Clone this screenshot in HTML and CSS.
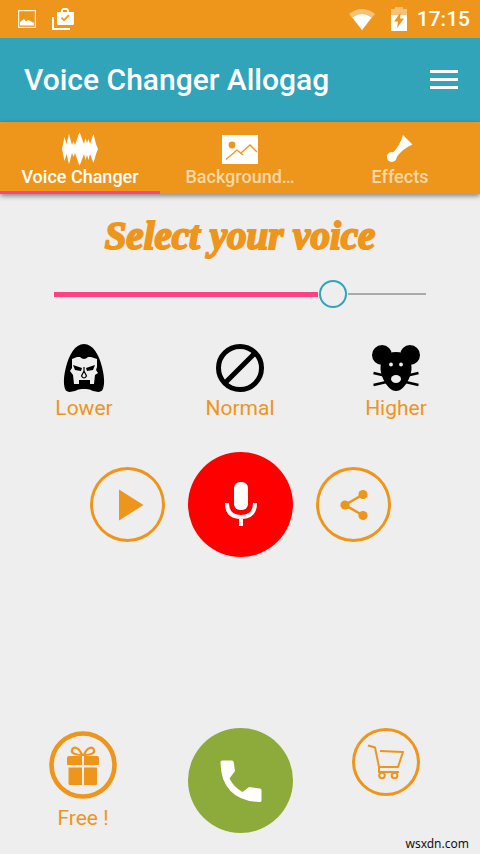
FILE: index.html
```html
<!DOCTYPE html>
<html lang="en">
<head>
<meta charset="utf-8">
<meta name="viewport" content="width=device-width, initial-scale=1">
<title>Voice Changer Allogag</title>
<link rel="stylesheet" href="styles.css">
</head>
<body>
<div class="app">
  <div class="status">
    <div class="status-group">
      <svg class="pic" viewBox="0 0 18 18" aria-hidden="true"><path d="M.6.6h16.8v16.8H.6z" fill="none" stroke="#fff3dc" stroke-width="1.2"/><path d="M2 15.500v-3.500l4-3 2 2.500 2-1.500 2.500 1 3.500 2v2.500z" fill="#fff"/></svg>
      <svg class="bag" viewBox="0 0 22 22" aria-hidden="true"><path d="M1 9v12h17" fill="none" stroke="#fff" stroke-width="2"/><path fill="#fff" fill-rule="evenodd" d="M5 4h4V2l2-2h4l2 2v2h5v11.500a1.500 1.500 0 0 1-1.500 1.500h-14A1.500 1.500 0 0 1 5 15.500zM11 4h4V2h-4z"/><path d="M9.500 9.700l2.500 2.500 5-5" fill="none" stroke="#ee951c" stroke-width="1.700"/></svg>
    </div>
    <div class="status-group status-right">
      <svg class="wifi" viewBox="0 0 26 21" aria-hidden="true"><path d="M0 5Q13-5 26 5L13 21z" fill="#f6c27a"/><path d="M3.500 8.500Q13 1.500 22.500 8.500L13 21z" fill="#fff"/></svg>
      <svg class="battery" viewBox="0 0 16 24" aria-hidden="true"><path d="M0 2h4V0h8v2h4v7H0z" fill="#f6c27a"/><path d="M0 8h16v16H0z" fill="#fff"/><path d="M9.500 5.500L3 14.500h4L6 21l7-9.500H9z" fill="#ee951c"/></svg>
      <time class="clock">17:15</time>
    </div>
  </div>

  <header class="bar">
    <h1 class="title">Voice Changer Allogag</h1>
    <button class="menu" type="button" aria-label="Menu"><svg viewBox="0 0 28 20" aria-hidden="true"><path d="M0 1.500h28M0 9.500h28M0 17.500h28" stroke="#fff" stroke-width="3"/></svg></button>
  </header>

  <nav class="tabs">
    <button class="tab tab-active" type="button">
      <svg viewBox="0 0 36 36" aria-hidden="true"><path fill="#fff" d="M0 18L2.500 6 4.500 13 7 3l3 11 1.500-4 1.500 4L17.500 1 22 13l1.500-6 1.500 5 1.500-4 1.500 5L31.500 3l2.500 10 2 5-2 5-2.500 9L28 23l-1.500 6-1.500-5-1.500 5L22 23l-4.500 12L13 22l-1.500 4-1.500-4-3 11L4.500 23l-2 7z"/></svg>
      <span>Voice Changer</span>
    </button>
    <button class="tab" type="button">
      <svg viewBox="0 0 36 36" aria-hidden="true"><path d="M0 4h36v29H0z" fill="#fff"/><circle cx="10" cy="14" r="3.400" fill="#ee951c"/><path d="M4 28.500L15 19l6 5M19 22l9-8 7 7M21 24l-2.500-2" fill="none" stroke="#ee951c" stroke-width="1.300"/></svg>
      <span>Background…</span>
    </button>
    <button class="tab" type="button">
      <svg viewBox="0 0 36 36" aria-hidden="true"><path d="M21 4l9.500 9.500Q20 18 14.500 26.500L10 22.500Q18 15 21 4z" fill="#fff"/><circle cx="9.800" cy="26" r="4.900" fill="#fff"/></svg>
      <span>Effects</span>
    </button>
  </nav>

  <main class="content">
    <h2 class="heading"><label for="voice">Select your voice</label></h2>
    <input class="slider" id="voice" type="range" min="0" max="100" value="75">

    <div class="presets">
      <button class="preset" type="button">
        <svg viewBox="0 0 48 48" aria-hidden="true"><path d="M24 0c9 0 15 11 18 23 2 8 3 16 1 22-2 4-6 3-10 2-4-2-6-2-9-2s-5 0-9 2c-4 1-8 2-10-2-2-6-1-14 1-22C9 11 15 0 24 0z"/><path fill="#eee" d="M12 15l5-2h3q4 4 8 0h3l6 2v8l-1 3 2 3-3 2-1 9h-4v-4H19v4h-5l-1-9-3-4 2-3z"/><path d="M13 21l9 3-1 3-6-1zM35 21l-9 3 1 3 6-1z"/><path d="M24 23v4l-2.500 5q2.500 4 5 0L24 27" fill="none" stroke="#000" stroke-width="1.200"/></svg>
        <span>Lower</span>
      </button>
      <button class="preset" type="button">
        <svg viewBox="0 0 48 48" aria-hidden="true"><g fill="none" stroke="#000" stroke-width="5"><circle cx="24" cy="24" r="21.500"/><path d="M39 9L9 39"/></g></svg>
        <span>Normal</span>
      </button>
      <button class="preset" type="button">
        <svg viewBox="0 0 48 48" aria-hidden="true"><circle cx="10" cy="11" r="10"/><circle cx="38" cy="11" r="10"/><path d="M24 8c10 0 15.500 7 15.500 16S32 47 24 47 8.500 33 8.500 24 14 8 24 8z"/><path d="M1.500 29l13 3M1.500 41l13-3M46.500 29l-13 3M46.500 41l-13-3" stroke="#000" stroke-width="2.600"/><g fill="#eee"><circle cx="19" cy="20.500" r="1.900"/><circle cx="29" cy="20.500" r="1.900"/><ellipse cx="24" cy="35" rx="5" ry="4"/></g></svg>
        <span>Higher</span>
      </button>
    </div>

    <div class="actions">
      <button class="ring" type="button" aria-label="Play"><svg viewBox="0 0 75 75" aria-hidden="true"><path d="M29 22.500v31L53.500 38z" fill="#ee951c"/></svg></button>
      <button class="round record" type="button" aria-label="Record"><svg viewBox="0 0 105 105" aria-hidden="true"><rect x="46" y="30" width="14" height="28" rx="6" fill="#fff"/><path d="M39 51q0 14 14 14t14-14M53 65v9" fill="none" stroke="#fff" stroke-width="4"/></svg></button>
      <button class="ring" type="button" aria-label="Share"><svg viewBox="0 0 75 75" aria-hidden="true"><path d="M47 27.500L29 38l18 10.500" fill="none" stroke="#ee951c" stroke-width="2.600"/><g fill="#ee951c"><circle cx="47" cy="27.500" r="4.600"/><circle cx="29" cy="38" r="4.600"/><circle cx="47" cy="48.500" r="4.600"/></g></svg></button>
    </div>
  </main>

  <footer class="footer">
    <button class="free" type="button">
      <svg viewBox="0 0 70 74" aria-hidden="true"><g fill="none" stroke="#ee951c"><circle cx="35" cy="37" r="31.500" stroke-width="4.600"/><path d="M34 27c-3-8-9-9-10-5-1 3 3 5 10 5zM36 27c3-8 9-9 10-5 1 3-3 5-10 5z" stroke-width="2.200"/></g><g fill="#ee951c"><path d="M21 28h13v9H20a1 1 0 0 1-1-1v-6a2 2 0 0 1 2-2zM36 28h13a2 2 0 0 1 2 2v6a1 1 0 0 1-1 1H36zM20.500 39.500H34V57H22a1.500 1.500 0 0 1-1.500-1.500zM36 39.500h13v16a1.500 1.500 0 0 1-1.500 1.500H36z"/></g></svg>
      <span>Free !</span>
    </button>
    <button class="round call" type="button" aria-label="Call"><svg viewBox="0 0 105 105" aria-hidden="true"><path fill="#fff" d="M34 32.500h10q1.500 0 1.700 1.500l1.300 9-5.500 7.500q4.500 9 13 13.500l6.500-5 11 1.500q1.500.2 1.500 2v10q0 1.500-2 1.500-19-.5-29-11T32.500 34.500q0-2 1.500-2z"/></svg></button>
    <button class="ring cart" type="button" aria-label="Shop"><svg viewBox="0 0 68 68" aria-hidden="true"><g fill="none" stroke="#ee951c" stroke-width="2"><path d="M16 17.500l7 2L27 39h19l5-15-23-1M27 39v5h20" stroke-linejoin="round"/><circle cx="30" cy="47.500" r="2.800"/><circle cx="42.500" cy="47.500" r="2.800"/></g></svg></button>
    <small class="credit">wsxdn.com</small>
  </footer>
</div>
</body>
</html>
```
FILE: styles.css
```css
:root {
  --orange: #ee951c;
  --teal: #31a4ba;
  --pink: #ff4081;
  --page: #eee;
}

* { box-sizing: border-box; }

body {
  margin: 0;
  background: var(--page);
  color: var(--orange);
  font-family: Roboto, "Liberation Sans", sans-serif;
}

button {
  margin: 0;
  padding: 0;
  border: 0;
  background: none;
  color: inherit;
  font: inherit;
  cursor: pointer;
}

svg { display: block; }

.app {
  display: flex;
  flex-direction: column;
  min-height: 100vh;
}

.status {
  display: flex;
  justify-content: space-between;
  align-items: center;
  height: 38px;
  padding: 0 10px 0 18px;
  background: var(--orange);
  color: #fff;
}

.status-group {
  display: flex;
  align-items: center;
  gap: 16px;
}

.status-right { gap: 10px; }
.pic { width: 18px; height: 18px; }
.bag { width: 22px; height: 22px; }
.wifi { width: 26px; height: 21px; margin-right: 6px; }
.battery { width: 16px; height: 24px; }

.clock {
  font-size: 21px;
  font-weight: 500;
  line-height: 24px;
}

.bar {
  display: flex;
  justify-content: space-between;
  align-items: center;
  height: 84px;
  padding: 0 22px 0 24px;
  background: var(--teal);
  color: #fff;
}

.title {
  margin: 0;
  font-size: 30px;
  font-weight: 500;
  line-height: 36px;
}

.menu svg { width: 28px; height: 20px; }

.tabs {
  display: grid;
  grid-template-columns: repeat(3, 1fr);
  height: 72px;
  background: var(--orange);
  box-shadow: 0 2px 5px rgba(0, 0, 0, .45);
}

.tab {
  display: flex;
  flex-direction: column;
  align-items: center;
  padding-top: 9px;
  border-bottom: 3px solid transparent;
  color: #fbd9a5;
  font-size: 18px;
  font-weight: 500;
  line-height: 20px;
}

.tab svg { width: 36px; height: 36px; }

.tab-active {
  border-color: var(--pink);
  color: #fff;
}

.content {
  display: flex;
  flex-direction: column;
  padding-top: 20px;
}

.heading {
  margin: 0;
  font-family: "Liberation Serif", serif;
  font-size: 39px;
  font-style: italic;
  font-weight: 700;
  line-height: 44px;
  text-align: center;
  -webkit-text-stroke: 2px var(--orange);
}

.slider {
  appearance: none;
  height: 28px;
  margin: 22px 40px 0;
  background: none;
}

/* The thumb centre sits 14px inside each end; both lines stop 15px short of it. */
.slider::-webkit-slider-runnable-track {
  --centre: calc(14px + (100% - 28px) * .75);
  height: 28px;
  background:
    linear-gradient(to right, transparent 14px, var(--pink) 14px calc(var(--centre) - 15px), transparent 0) center / 100% 5px no-repeat,
    linear-gradient(to right, transparent calc(var(--centre) + 15px), #aaa 0 calc(100% - 14px), transparent 0) center / 100% 2px no-repeat;
}

.slider::-webkit-slider-thumb {
  appearance: none;
  width: 28px;
  height: 28px;
  border: 2px solid var(--teal);
  border-radius: 50%;
  background: var(--page);
}

.presets {
  display: grid;
  grid-template-columns: repeat(3, 1fr);
  margin: 36px 6px 0;
}

.preset {
  display: flex;
  flex-direction: column;
  align-items: center;
  font-size: 21px;
  line-height: 24px;
}

.preset svg { width: 48px; height: 48px; margin-bottom: 4px; }

.actions {
  display: flex;
  justify-content: center;
  align-items: center;
  gap: 23px;
  margin-top: 32px;
}

.ring {
  width: 75px;
  height: 75px;
  border-radius: 50%;
  box-shadow: inset 0 0 0 3px var(--orange);
}

.round {
  width: 105px;
  height: 105px;
  border-radius: 50%;
}

.record { background: #f00; }
.call { background: #8dab3b; }

.footer {
  position: relative;
  display: grid;
  grid-template-columns: 1fr auto 1fr;
  align-items: start;
  margin-top: auto;
  padding: 0 48px 21px;
}

.free {
  justify-self: start;
  font-size: 21px;
  line-height: 24px;
}

.free svg { width: 70px; height: 74px; margin-bottom: 4px; }

.cart {
  justify-self: end;
  width: 68px;
  height: 68px;
  margin-right: 12px;
}

.credit {
  position: absolute;
  right: 11px;
  bottom: 2px;
  color: #111;
  font-family: "Noto Sans", sans-serif;
  font-size: 12px;
  line-height: 16px;
}
```
